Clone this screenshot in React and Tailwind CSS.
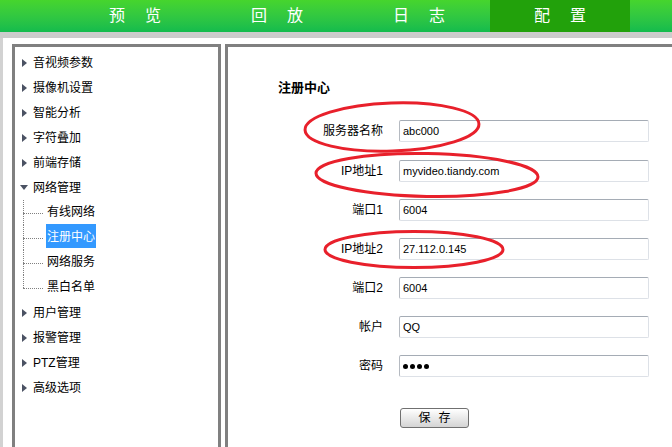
const tabs = [
  { a: "预", b: "览", w: "w-[142px]" },
  { a: "回", b: "放", w: "w-[142px]" },
  { a: "日", b: "志", w: "w-[142px]" },
  { a: "配", b: "置", w: "w-[140px]", active: true },
];

const topItems = ["音视频参数", "摄像机设置", "智能分析", "字符叠加", "前端存储"];
const netItems = ["有线网络", "注册中心", "网络服务", "黑白名单"];
const bottomItems = ["用户管理", "报警管理", "PTZ管理", "高级选项"];

const fields = [
  { label: "服务器名称", value: "abc000" },
  { label: "IP地址1", value: "myvideo.tiandy.com" },
  { label: "端口1", value: "6004" },
  { label: "IP地址2", value: "27.112.0.145" },
  { label: "端口2", value: "6004" },
  { label: "帐户", value: "QQ" },
  { label: "密码", value: null },
];

function Arrow({ open }) {
  if (open) {
    return (
      <span className="w-[12px] flex items-center">
        <span className="w-0 h-0 border-l-[4px] border-r-[4px] border-t-[5px] border-l-transparent border-r-transparent border-t-[#4b5263]" />
      </span>
    );
  }
  return (
    <span className="w-[12px] flex items-center">
      <span className="ml-[2px] w-0 h-0 border-t-[4px] border-b-[4px] border-l-[5px] border-t-transparent border-b-transparent border-l-[#4b5263]" />
    </span>
  );
}

function TreeRow({ label, open }) {
  return (
    <div className="h-[25px] flex items-center pl-[5px]">
      <Arrow open={open} />
      <span className="ml-[1px] text-[12px] leading-[14px] text-black">{label}</span>
    </div>
  );
}

function SubRow({ label, last, selected }) {
  return (
    <div className="h-[25px] flex items-center">
      <div className="ml-[8px] w-[20px] h-full flex flex-col">
        <div className="h-1/2 border-l border-dotted border-[#808080]" />
        <div
          className={
            "h-1/2 border-t border-dotted border-[#808080] " +
            (last ? "" : "border-l")
          }
        />
      </div>
      <span
        className={
          "ml-[3px] h-[24px] mb-[3px] flex items-center px-[1px] pt-[1px] text-[12px] leading-[14px] " +
          (selected ? "bg-[#3399ff] text-white" : "text-black")
        }
      >
        {label}
      </span>
    </div>
  );
}

export default function App() {
  return (
    <div className="relative w-[672px] h-[447px] overflow-hidden bg-white font-['Liberation_Sans','Noto_Sans_CJK_SC',sans-serif]">
      {/* top navigation */}
      <div className="h-[32px] flex bg-gradient-to-b from-[#46d52d] to-[#12bb4d]">
        <div className="w-[64px] shrink-0" />
        {tabs.map((t) => (
          <div
            key={t.a}
            className={
              t.w +
              " shrink-0 h-full flex items-center justify-center gap-[20px] text-[16px] leading-[18px] text-white " +
              (t.active ? "bg-[#22a10b]" : "")
            }
          >
            <span>{t.a}</span>
            <span>{t.b}</span>
          </div>
        ))}
      </div>
      <div className="h-[6px] bg-[#cccccc]" />

      <div className="flex h-[409px]">
        <div className="w-[3px] shrink-0 bg-[#d2d2d2]" />
        <div className="flex-1 min-w-0 flex pt-[6px] pl-[9px]">
          {/* left tree */}
          <div className="w-[209px] shrink-0 h-[420px] border-[3px] border-b-0 border-[#808080] pt-[3px]">
            {topItems.map((l) => (
              <TreeRow key={l} label={l} />
            ))}
            <TreeRow label="网络管理" open />
            {netItems.map((l, i) => (
              <SubRow
                key={l}
                label={l}
                selected={i === 1}
                last={i === netItems.length - 1}
              />
            ))}
            {bottomItems.map((l) => (
              <TreeRow key={l} label={l} />
            ))}
          </div>

          {/* right form */}
          <div className="ml-[4px] flex-1 min-w-0 h-[420px] border-[3px] border-b-0 border-r-0 border-[#808080] pl-[50px]">
            <div className="mt-[31px] h-[20px] flex items-center text-[13px] font-bold text-black">
              注册中心
            </div>
            <div className="mt-[22px] flex flex-col gap-[17px]">
              {fields.map((f, i) => (
                <div key={f.label} className={"flex items-center " + (i === 1 ? "mt-[1px]" : "")}>
                  <div className="w-[105px] text-right text-[12px] leading-[14px] text-black">
                    {f.label}
                  </div>
                  <div className="ml-[16px] w-[250px] h-[22px] flex items-center px-[3px] rounded-[2px] border border-t-[#a5acb5] border-l-[#b5bac1] border-r-[#dde1e7] border-b-[#dde1e7] text-[11px] text-black">
                    {f.value !== null ? (
                      f.value
                    ) : (
                      <span className="flex gap-[2px]">
                        <span className="w-[5px] h-[5px] rounded-full bg-black" />
                        <span className="w-[5px] h-[5px] rounded-full bg-black" />
                        <span className="w-[5px] h-[5px] rounded-full bg-black" />
                        <span className="w-[5px] h-[5px] rounded-full bg-black" />
                      </span>
                    )}
                  </div>
                </div>
              ))}
            </div>
            <div className="mt-[31px] ml-[122px]">
              <button className="w-[69px] h-[20px] flex items-center justify-center gap-[8px] rounded-[3px] border border-[#707070] bg-gradient-to-b from-white to-[#d4d4d4] text-[12px] leading-[14px] text-black">
                <span>保</span>
                <span>存</span>
              </button>
            </div>
          </div>
        </div>
      </div>

      {/* red annotation ellipses */}
      <svg
        className="absolute left-0 top-0 pointer-events-none"
        width="672"
        height="447"
      >
        <g fill="none" stroke="#e8202b" strokeWidth="3">
          <ellipse cx="392" cy="127" rx="87" ry="24" transform="rotate(-2 392 127)" />
          <ellipse cx="427" cy="175" rx="111" ry="21.5" transform="rotate(1 427 175)" />
          <ellipse cx="414" cy="249.5" rx="89" ry="18" />
        </g>
      </svg>
    </div>
  );
}
